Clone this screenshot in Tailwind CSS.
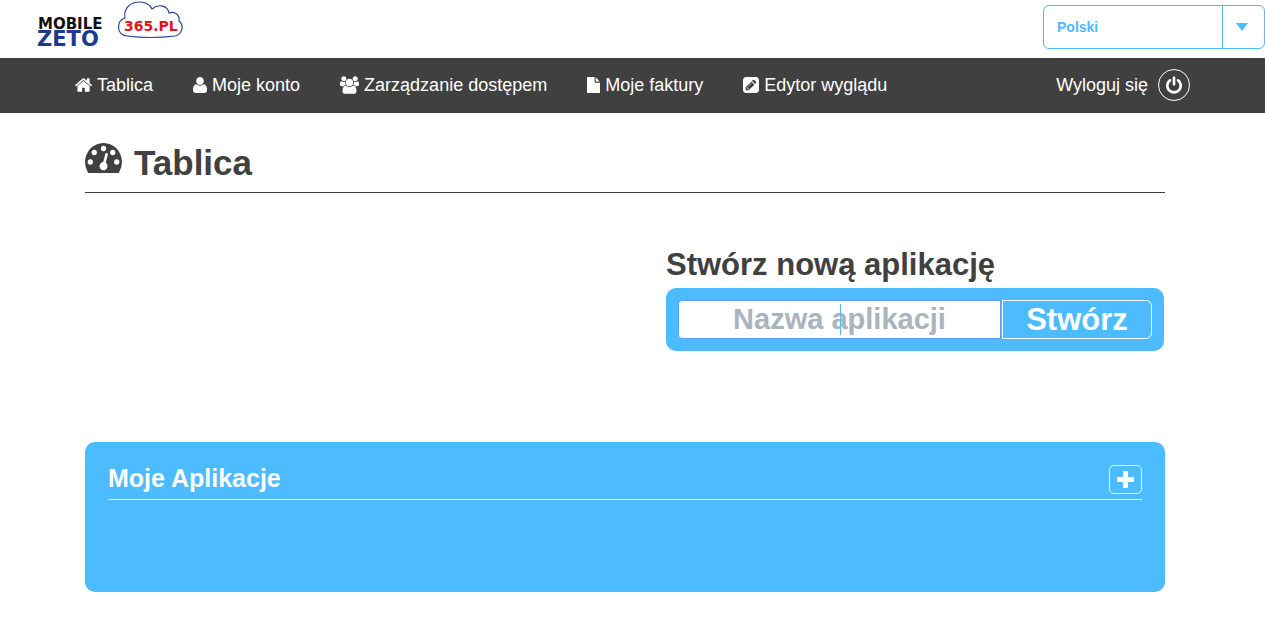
<!DOCTYPE html>
<html lang="pl">
<head>
  <meta charset="UTF-8" />
  <meta name="viewport" content="width=device-width, initial-scale=1.0"/>
  <title>Tablica | Mobile ZETO 365.pl</title>
  <script src="https://cdn.jsdelivr.net/npm/@tailwindcss/browser@4"></script>
</head>
<body class="bg-white font-['Liberation_Sans',Arial,sans-serif] text-[#404040]">
  <header class="flex h-[58px] items-start justify-between pl-8">
    <a href="#" aria-label="Mobile ZETO 365.pl">
      <svg class="h-14 w-40" viewBox="32 0 160 56" font-family="DejaVu Sans, sans-serif" font-weight="bold">
        <text x="38" y="29" font-size="15" fill="#111">MOBILE</text>
        <text x="37" y="46" font-size="21" fill="#1b3b8f">ZETO</text>
        <path d="M127 36C116 35 116 20 125 18C123 8 131 2 140 2C146 2 150 5 152 9C159 3 168 6 169 13C175 11 180 15 179 21C184 25 183 34 175 36Q150 39 127 36Z" fill="#fff" stroke="#27468f" stroke-width="1.2"/>
        <text x="124" y="31" font-size="14" fill="#e3131b">365.PL</text>
      </svg>
    </a>
    <div class="relative mt-[5px]">
      <select aria-label="Język" class="h-11 w-[222px] appearance-none rounded-md border border-[#4dbbff] bg-white pl-[13px] text-sm font-bold text-[#4dbbff]">
        <option>Polski</option>
        <option>English</option>
      </select>
      <span class="pointer-events-none absolute inset-y-0 right-0 flex w-[43px] items-center justify-center border-l border-[#4dbbff] pr-1">
        <svg class="h-2 w-3" viewBox="0 0 12 8" fill="#4dbbff"><path d="M0 0h12L6 8z"/></svg>
      </span>
    </div>
  </header>

  <nav class="flex h-[55px] items-center justify-between bg-[#404040] px-[75px] pb-0.5 text-lg text-white">
    <div class="flex gap-10">
      <a href="#" class="flex items-center gap-[5px]">
        <svg class="h-[14px] w-[17px]" viewBox="90 240 1612 1296" fill="currentColor"><path d="M1472 992v480q0 26-19 45t-45 19h-384v-384h-256v384h-384q-26 0-45-19t-19-45v-480q0-1 .5-3t.5-3l575-474 575 474q1 2 1 6zm223-69l-62 74q-8 9-21 11h-3q-13 0-21-7l-692-577-692 577q-12 8-24 7-13-2-21-11l-62-74q-8-10-7-23.5t11-21.5l719-599q32-26 76-26t76 26l244 204v-195q0-14 9-23t23-9h192q14 0 23 9t9 23v408l219 182q10 8 11 21.5t-7 23.5z"/></svg>
        Tablica
      </a>
      <a href="#" class="flex items-center gap-[5px]">
        <svg class="h-4 w-[14px]" viewBox="192 128 1408 1536" preserveAspectRatio="none" fill="currentColor"><path d="M1600 1405q0 120-73 189.5t-194 69.5h-874q-121 0-194-69.5t-73-189.5q0-53 3.5-103.5t14-109 26.5-108.5 43-97.5 62-81 85.5-53.5 111.5-20q9 0 42 21.5t74.5 48 108 48 133.5 21.5 133.5-21.5 108-48 74.5-48 42-21.5q61 0 111.5 20t85.5 53.5 62 81 43 97.5 26.5 108.5 14 109 3.5 103.5zm-320-893q0 159-112.5 271.5t-271.5 112.5-271.5-112.5-112.5-271.5 112.5-271.5 271.5-112.5 271.5 112.5 112.5 271.5z"/></svg>
        Moje konto
      </a>
      <a href="#" class="flex items-center gap-[5px]">
        <svg class="h-[18px] w-[19px]" viewBox="-64 0 1920 1792" fill="currentColor"><path d="M529 896q-162 5-265 128h-134q-82 0-138-40.5t-56-118.5q0-353 124-353 6 0 43.5 21t97.5 42.5 119 21.5q67 0 133-23-5 37-5 66 0 139 81 256zm1071 637q0 120-73 189.5t-194 69.5h-874q-121 0-194-69.5t-73-189.5q0-53 3.5-103.5t14-109 26.5-108.5 43-97.5 62-81 85.5-53.5 111.5-20q10 0 43 21.5t73 48 107 48 135 21.5 135-21.5 107-48 73-48 43-21.5q61 0 111.5 20t85.5 53.5 62 81 43 97.5 26.5 108.5 14 109 3.5 103.5zm-1024-1277q0 106-75 181t-181 75-181-75-75-181 75-181 181-75 181 75 75 181zm704 384q0 159-112.5 271.5t-271.5 112.5-271.5-112.5-112.5-271.5 112.5-271.5 271.5-112.5 271.5 112.5 112.5 271.5zm576 225q0 78-56 118.5t-138 40.5h-134q-103-123-265-128 81-117 81-256 0-29-5-66 66 23 133 23 59 0 119-21.5t97.5-42.5 43.5-21q124 0 124 353zm-128-609q0 106-75 181t-181 75-181-75-75-181 75-181 181-75 181 75 75 181z"/></svg>
        Zarządzanie dostępem
      </a>
      <a href="#" class="flex items-center gap-[5px]">
        <svg class="h-4 w-[13px]" viewBox="128 0 1536 1792" preserveAspectRatio="none" fill="currentColor"><path d="M1152 512v-472q22 14 36 28l408 408q14 14 28 36h-472zm-128 32q0 40 28 68t68 28h544v1056q0 40-28 68t-68 28h-1344q-40 0-68-28t-28-68v-1600q0-40 28-68t68-28h800v544z"/></svg>
        Moje faktury
      </a>
      <a href="#" class="flex items-center gap-[5px]">
        <svg class="size-4" viewBox="0 128 1536 1536" fill="currentColor"><path d="M404 1108l152 152-52 52h-56v-96h-96v-56zm414-390q14 13-3 30l-291 291q-17 17-30 3-14-13 3-30l291-291q17-17 30-3zm-274 690l544-544-288-288-544 544v288h288zm608-608l92-92q28-28 28-68t-28-68l-152-152q-28-28-68-28t-68 28l-92 92zm384-384v960q0 119-84.5 203.5t-203.5 84.5h-960q-119 0-203.5-84.5t-84.5-203.5v-960q0-119 84.5-203.5t203.5-84.5h960q119 0 203.5 84.5t84.5 203.5z"/></svg>
        Edytor wyglądu
      </a>
    </div>
    <a href="#" class="flex items-center gap-[10px]">
      Wyloguj się
      <span class="flex size-8 items-center justify-center rounded-full border border-white">
        <svg class="h-[18px] w-4" viewBox="128 0 1536 1664" fill="currentColor"><path d="M1664 896q0 156-61 298t-164 245-245 164-298 61-298-61-245-164-164-245-61-298q0-182 80.5-343t226.5-270q43-32 95.5-25t83.5 50q32 42 24.5 94.5t-49.5 84.5q-98 74-151.5 181t-53.5 228q0 104 40.5 198.5t109.5 163.5 163.5 109.5 198.5 40.5 198.5-40.5 163.5-109.5 109.5-163.5 40.5-198.5q0-121-53.5-228t-151.5-181q-42-32-49.5-84.5t24.5-94.5q31-43 84-50t95 25q146 109 226.5 270t80.5 343zm-640-768v640q0 52-38 90t-90 38-90-38-38-90v-640q0-52 38-90t90-38 90 38 38 90z"/></svg>
      </span>
    </a>
  </nav>

  <main class="pr-[15px]">
    <div class="mx-auto max-w-[1080px]">
      <h1 class="flex h-20 items-start gap-3 border-b border-[#404040] pt-[30px] text-[35px]/10 font-bold">
        <svg class="h-[30px] w-[37px]" viewBox="0 256 1792 1408" preserveAspectRatio="none" fill="currentColor" fill-rule="evenodd">
          <path d="M1792 1152q0 261-141 483-19 29-54 29h-1402q-35 0-54-29-141-221-141-483 0-182 71-348t191-286 286-191 348-71 348 71 286 191 191 286 71 348zM384 1152a128 128 0 1 0-256 0a128 128 0 1 0 256 0zM576 704a128 128 0 1 0-256 0a128 128 0 1 0 256 0zM1024 512a128 128 0 1 0-256 0a128 128 0 1 0 256 0zM1472 704a128 128 0 1 0-256 0a128 128 0 1 0 256 0zM1664 1152a128 128 0 1 0-256 0a128 128 0 1 0 256 0zM1005 1185l101-382q6-26-7.5-48.5t-38.5-29.5-48 6.5-30 39.5l-101 382q-60 5-107 43.5t-63 98.5q-20 77 20 146t117 89 146-20 89-117q16-60-6-117t-72-91z"/>
        </svg>
        Tablica
      </h1>

      <form class="mt-[53px] mr-px ml-auto w-[498px]">
        <label for="appName" class="block text-[31px]/[38px] font-bold">Stwórz nową aplikację</label>
        <div class="mt-1 flex h-[63px] rounded-[10px] bg-[#4dbbff] p-3">
          <div class="relative flex-1">
            <input id="appName" type="text" placeholder="Nazwa aplikacji" class="size-full rounded-l-[4px] border border-[#5c9dff] bg-white text-center text-[29px] font-bold caret-transparent outline-none placeholder:text-[#aab4be]"/>
            <span class="pointer-events-none absolute inset-y-1 left-1/2 w-px bg-[#4dbbff]"></span>
          </div>
          <button type="submit" class="ml-px w-[150px] rounded-r-md border border-white text-[31px]/[37px] font-bold text-white">Stwórz</button>
        </div>
      </form>

      <section class="mt-[91px] h-[150px] rounded-[10px] bg-[#4dbbff] px-[23px] pt-[23px] text-white">
        <div class="flex items-start justify-between border-b border-white pb-[5px]">
          <h2 class="text-[25px]/[26px] font-bold">Moje Aplikacje</h2>
          <button type="button" aria-label="Dodaj aplikację" class="flex h-[29px] w-[33px] items-center justify-center rounded-[5px] border border-white">
            <svg class="size-[17px]" viewBox="0 0 17 17" fill="currentColor"><path d="M7 0h3q1 0 1 1v5h5q1 0 1 1v3q0 1-1 1h-5v5q0 1-1 1H7q-1 0-1-1v-5H1q-1 0-1-1V7q0-1 1-1h5V1q0-1 1-1z"/></svg>
          </button>
        </div>
      </section>
    </div>
  </main>
</body>
</html>
